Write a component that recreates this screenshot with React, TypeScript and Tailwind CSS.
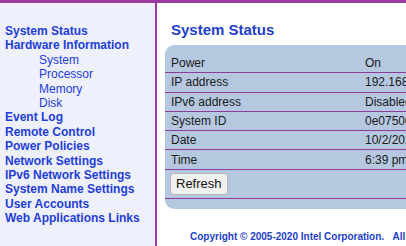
import React from "react";

const side = [
  { t: "System Status", sub: false },
  { t: "Hardware Information", sub: false },
  { t: "System", sub: true },
  { t: "Processor", sub: true },
  { t: "Memory", sub: true },
  { t: "Disk", sub: true },
  { t: "Event Log", sub: false },
  { t: "Remote Control", sub: false },
  { t: "Power Policies", sub: false },
  { t: "Network Settings", sub: false },
  { t: "IPv6 Network Settings", sub: false },
  { t: "System Name Settings", sub: false },
  { t: "User Accounts", sub: false },
  { t: "Web Applications Links", sub: false },
];

const rows = [
  ["Power", "On"],
  ["IP address", "192.168.1.100"],
  ["IPv6 address", "Disabled"],
  ["System ID", "0e0750000000"],
  ["Date", "10/2/2020"],
  ["Time", "6:39 pm"],
];

export default function App() {
  return (
    <div
      className="w-[406px] h-[246px] overflow-hidden bg-white border-t-[3px] border-[#9a3c9f] flex"
      style={{ fontFamily: '"Liberation Sans", Arial, sans-serif' }}
    >
      <div className="w-[157px] shrink-0 bg-[#eef0fb] border-r-2 border-[#9a3c9f] pt-[21px] pl-[5px]">
        {side.map((s) => (
          <div
            key={s.t}
            className={
              s.sub
                ? "pl-[34px] text-[12px] leading-[14.4px] text-[#1f3ed8] whitespace-nowrap"
                : "text-[12px] leading-[14.4px] font-bold text-[#1f3ed8] whitespace-nowrap"
            }
          >
            {s.t}
          </div>
        ))}
      </div>
      <div className="flex-1 min-w-0 pt-[18px] pl-[8px] flex flex-col items-start">
        <div className="pl-[6px] text-[15px] leading-[18px] font-bold text-[#2340c8] whitespace-nowrap">
          System Status
        </div>
        <div className="mt-[6px] w-[300px] shrink-0 bg-[#b5c8e0] rounded-l-[9px] pt-[9px] pb-[10px]">
          {rows.map(([k, v]) => (
            <div
              key={k}
              className="flex h-[19.3px] items-center border-b border-[#8e3c9a] text-[12px] text-[#1a1a1a] whitespace-nowrap"
            >
              <div className="w-[200px] shrink-0 pl-[6px]">{k}</div>
              <div className="shrink-0">{v}</div>
            </div>
          ))}
          <div className="h-[29px] flex items-center border-b border-[#8e3c9a] pl-[5px]">
            <button className="h-[22px] px-[5px] bg-[#f1f1f1] border border-[#b8b8b8] rounded-[4px] text-[13px] leading-[16px] text-[#111]">
              Refresh
            </button>
          </div>
        </div>
        <div className="mt-[22px] pl-[25px] text-[10px] leading-[12px] font-bold text-[#2340c8] whitespace-nowrap">
          Copyright © 2005-2020 Intel Corporation.&nbsp;&nbsp;&nbsp;All Rights Reserved.
        </div>
      </div>
    </div>
  );
}
